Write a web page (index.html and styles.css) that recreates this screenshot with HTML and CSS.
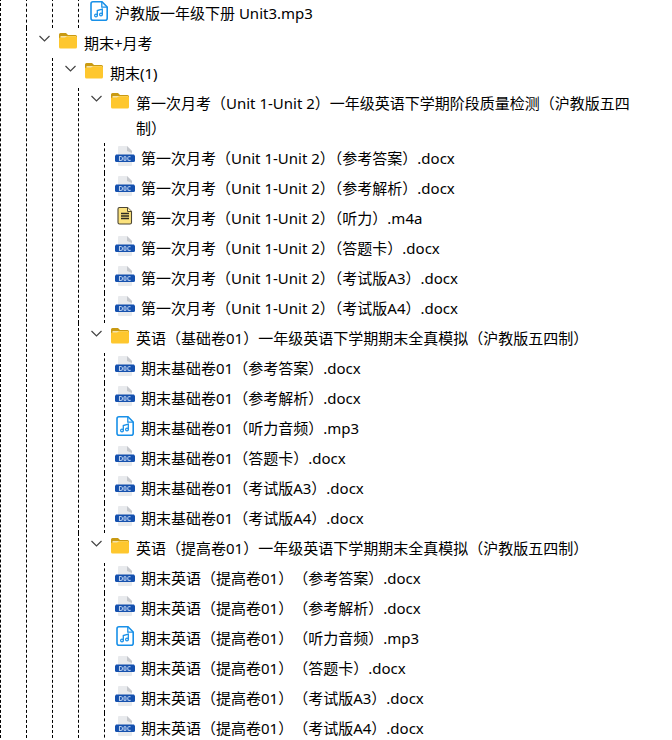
FILE: index.html
```html
<!DOCTYPE html>
<html lang="zh-CN">
<head>
    <meta charset="UTF-8">
    <meta name="viewport" content="width=device-width, initial-scale=1.0">
    <title>文件列表</title>
    <link rel="stylesheet" href="styles.css">
</head>
<body>
    <!-- Icon sprite -->
    <svg class="sprite" aria-hidden="true">
        <symbol id="icon-chevron" viewBox="0 0 12 20">
            <path d="M.5 5l5 5 5-5" fill="none" stroke="#444" stroke-width="1.2"/>
        </symbol>
        <symbol id="icon-folder" viewBox="0 0 20 20">
            <path d="M1 12V3.500Q1 2 2.500 2H8l2 2h7.500Q19 4 19 5.500V12z" fill="#c99a12"/>
            <path d="M2.500 5h15.500V8H2.500z" fill="#f3e3ac"/>
            <path d="M1 7.500Q1 6.500 2.500 6.500H7l2-1.200h8.500Q19 5.300 19 6.500V16q0 1.500-1.500 1.500h-15Q1 17.500 1 16z" fill="#fec72e"/>
        </symbol>
        <symbol id="icon-doc" viewBox="0 0 20 20">
            <path d="M3 0h9l5 5v14q0 1-1 1H4q-1 0-1-1V1q0-1 1-1z" fill="#e8eaed"/>
            <path d="M12 0l5 5v2l-5-2z" fill="#c3c6cb"/>
            <path d="M1 8.500h18l1 1.500V14.500q0 1.500-1.500 1.500h-17Q0 16 0 14.500v-4.500z" fill="#1450ae"/>
            <path d="M4.500 10.500v4h1.200q1.800 0 1.800-2t-1.800-2zM9 11.500q0-1 1-1t1 1v2q0 1-1 1t-1-1zM15.500 11q-.5-.5-1.300-.5-1.500 0-1.500 2t1.500 2q.8 0 1.300-.5" fill="none" stroke="#b5cbec" stroke-width="1.100"/>
        </symbol>
        <symbol id="icon-music" viewBox="0 0 20 20">
            <path d="M4 .8h9l5.200 5.200v11.200q0 2-2 2H4q-2 0-2-2V2.800q0-2 2-2z" fill="#fff" stroke="#1890e8" stroke-width="1.600"/>
            <path d="M12.800 1V6.200H18" fill="none" stroke="#1890e8" stroke-width="1.300"/>
            <path d="M8.300 14.500V9.500l5-1.300V13.500" fill="none" stroke="#1890e8" stroke-width="1.300"/>
            <circle cx="7" cy="14.500" r="1.400" fill="none" stroke="#1890e8" stroke-width="1.200"/>
            <circle cx="12" cy="13.500" r="1.400" fill="none" stroke="#1890e8" stroke-width="1.200"/>
        </symbol>
        <symbol id="icon-note" viewBox="0 0 20 20">
            <path d="M4.500 1.500h8l4 4v11q0 1.500-1.500 1.500H4.500Q3 18 3 16.500V3q0-1.500 1.500-1.500z" fill="#fbe27d" stroke="#4c4634" stroke-width="1.100"/>
            <path d="M12.500 1.500v4h4" fill="#fff0b0" stroke="#4c4634"/>
            <path d="M6 7.500h8M6 10h8M6 12.500h8" stroke="#2e2b22" stroke-width="1.300"/>
        </symbol>
    </svg>

    <ul class="tree">
        <li>
            <ul>
                <li>
                    <ul>
                        <li>
                            <ul>
                                <li class="file"><svg class="icon"><use href="#icon-music"/></svg><span class="name">沪教版一年级下册 Unit3.mp3</span></li>
                            </ul>
                        </li>
                    </ul>
                </li>
                <li>
                    <details open>
                        <summary><svg class="arrow"><use href="#icon-chevron"/></svg><svg class="icon"><use href="#icon-folder"/></svg><span class="name">期末+月考</span></summary>
                        <ul>
                            <li>
                                <details open>
                                    <summary><svg class="arrow"><use href="#icon-chevron"/></svg><svg class="icon"><use href="#icon-folder"/></svg><span class="name">期末(1)</span></summary>
                                    <ul>
                                        <li>
                                            <details open>
                                                <summary><svg class="arrow"><use href="#icon-chevron"/></svg><svg class="icon"><use href="#icon-folder"/></svg><span class="name">第一次月考（Unit 1-Unit 2）一年级英语下学期阶段质量检测（沪教版五四制）</span></summary>
                                                <ul>
                                                    <li class="file"><svg class="icon"><use href="#icon-doc"/></svg><span class="name">第一次月考（Unit 1-Unit 2）（参考答案）.docx</span></li>
                                                    <li class="file"><svg class="icon"><use href="#icon-doc"/></svg><span class="name">第一次月考（Unit 1-Unit 2）（参考解析）.docx</span></li>
                                                    <li class="file"><svg class="icon"><use href="#icon-note"/></svg><span class="name">第一次月考（Unit 1-Unit 2）（听力）.m4a</span></li>
                                                    <li class="file"><svg class="icon"><use href="#icon-doc"/></svg><span class="name">第一次月考（Unit 1-Unit 2）（答题卡）.docx</span></li>
                                                    <li class="file"><svg class="icon"><use href="#icon-doc"/></svg><span class="name">第一次月考（Unit 1-Unit 2）（考试版A3）.docx</span></li>
                                                    <li class="file"><svg class="icon"><use href="#icon-doc"/></svg><span class="name">第一次月考（Unit 1-Unit 2）（考试版A4）.docx</span></li>
                                                </ul>
                                            </details>
                                        </li>
                                        <li>
                                            <details open>
                                                <summary><svg class="arrow"><use href="#icon-chevron"/></svg><svg class="icon"><use href="#icon-folder"/></svg><span class="name">英语（基础卷01）一年级英语下学期期末全真模拟（沪教版五四制）</span></summary>
                                                <ul>
                                                    <li class="file"><svg class="icon"><use href="#icon-doc"/></svg><span class="name">期末基础卷01（参考答案）.docx</span></li>
                                                    <li class="file"><svg class="icon"><use href="#icon-doc"/></svg><span class="name">期末基础卷01（参考解析）.docx</span></li>
                                                    <li class="file"><svg class="icon"><use href="#icon-music"/></svg><span class="name">期末基础卷01（听力音频）.mp3</span></li>
                                                    <li class="file"><svg class="icon"><use href="#icon-doc"/></svg><span class="name">期末基础卷01（答题卡）.docx</span></li>
                                                    <li class="file"><svg class="icon"><use href="#icon-doc"/></svg><span class="name">期末基础卷01（考试版A3）.docx</span></li>
                                                    <li class="file"><svg class="icon"><use href="#icon-doc"/></svg><span class="name">期末基础卷01（考试版A4）.docx</span></li>
                                                </ul>
                                            </details>
                                        </li>
                                        <li>
                                            <details open>
                                                <summary><svg class="arrow"><use href="#icon-chevron"/></svg><svg class="icon"><use href="#icon-folder"/></svg><span class="name">英语（提高卷01）一年级英语下学期期末全真模拟（沪教版五四制）</span></summary>
                                                <ul class="full-width">
                                                    <li class="file"><svg class="icon"><use href="#icon-doc"/></svg><span class="name">期末英语（提高卷01）（参考答案）.docx</span></li>
                                                    <li class="file"><svg class="icon"><use href="#icon-doc"/></svg><span class="name">期末英语（提高卷01）（参考解析）.docx</span></li>
                                                    <li class="file"><svg class="icon"><use href="#icon-music"/></svg><span class="name">期末英语（提高卷01）（听力音频）.mp3</span></li>
                                                    <li class="file"><svg class="icon"><use href="#icon-doc"/></svg><span class="name">期末英语（提高卷01）（答题卡）.docx</span></li>
                                                    <li class="file"><svg class="icon"><use href="#icon-doc"/></svg><span class="name">期末英语（提高卷01）（考试版A3）.docx</span></li>
                                                    <li class="file"><svg class="icon"><use href="#icon-doc"/></svg><span class="name">期末英语（提高卷01）（考试版A4）.docx</span></li>
                                                </ul>
                                            </details>
                                        </li>
                                    </ul>
                                </details>
                            </li>
                        </ul>
                    </details>
                </li>
            </ul>
        </li>
    </ul>
</body>
</html>
```
FILE: styles.css
```css
body {
    margin: 0;
    background-color: #fff;
    color: #000;
    font-family: "Noto Sans", "Noto Sans CJK SC", sans-serif;
    font-size: 15px;
    line-height: 25px;
    overflow: hidden;
}
.sprite {
    display: none;
}
.tree {
    margin-top: -2px;
    padding-right: 20px;
}
ul {
    margin: 0;
    padding: 0;
    list-style: none;
}
li {
    border-left: 1px dashed #000;
}
li ul {
    margin-left: 25px;
}
.file,
summary {
    display: flex;
    align-items: flex-start;
    padding: 3px 0 2px 10px;
}
summary {
    padding-left: 12px;
    cursor: pointer;
}
summary::-webkit-details-marker {
    display: none;
}
.icon {
    flex: none;
    width: 20px;
    height: 20px;
    margin-right: 6px;
}
.arrow {
    flex: none;
    width: 12px;
    height: 20px;
    margin-right: 7px;
}
.name {
    min-width: 0;
}
/* keep adjacent brackets at full width */
.full-width {
    text-spacing-trim: space-all;
}
```
